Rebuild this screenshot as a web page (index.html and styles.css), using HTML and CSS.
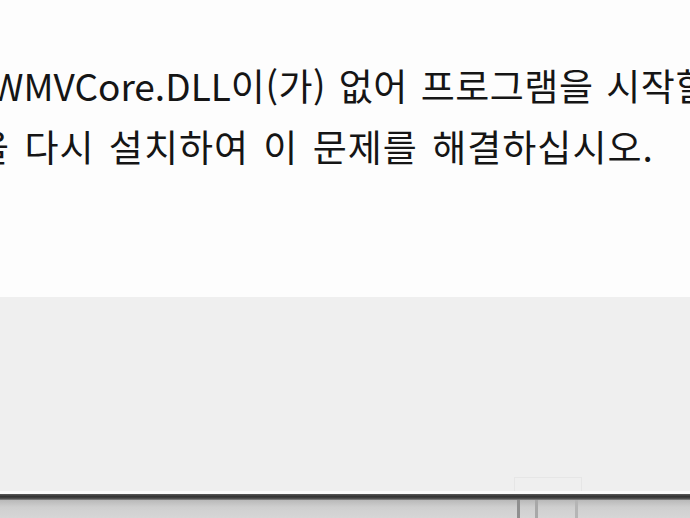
FILE: index.html
```html
<!DOCTYPE html>
<html lang="ko">
<head>
    <meta charset="UTF-8">
    <title>WMVCore.DLL 오류</title>
    <link rel="stylesheet" href="styles.css">
</head>
<body>
    <div class="dialog">
        <div class="message">
            <p class="line line-first"><span class="latin">WMVCore.DLL</span>이(가) 없어 프로그램을 시작할 수 없습니다.</p>
            <p class="line line-second">을 다시 설치하여 이 문제를 해결하십시오.</p>
        </div>
        <div class="button-bar">
            <div class="ghost-button"></div>
        </div>
        <div class="divider"></div>
        <div class="taskbar">
            <span class="tick tick-a"></span>
            <span class="tick tick-b"></span>
            <span class="tick tick-c"></span>
        </div>
    </div>
</body>
</html>
```

FILE: styles.css
```css
* {
    margin: 0;
    padding: 0;
    box-sizing: border-box;
}

html, body {
    width: 690px;
    height: 518px;
    overflow: hidden;
    background-color: #fdfdfd;
}

.dialog {
    display: flex;
    flex-direction: column;
    height: 518px;
}

.message {
    height: 297px;
    background-color: #fdfdfd;
    padding-top: 55px;
    overflow: hidden;
    font-family: "Noto Sans CJK KR", "Noto Sans", sans-serif;
    color: #151515;
    font-size: 37px;
    line-height: 61px;
}

.line {
    white-space: nowrap;
    letter-spacing: 1px;
    word-spacing: 3px;
}

.latin {
    letter-spacing: 0;
}

.line-first {
    margin-left: -9px;
    letter-spacing: 0.5px;
    word-spacing: 2px;
}

.line-second {
    margin-left: -25px;
}

.button-bar {
    height: 197px;
    background-color: #efefef;
    border-bottom: 3px solid #fafafa;
    display: flex;
    justify-content: flex-end;
    align-items: flex-end;
    padding-right: 108px;
}

.ghost-button {
    width: 68px;
    height: 14px;
    border: 1px solid #e6e6e6;
    border-bottom: none;
}

.divider {
    height: 6px;
    background: linear-gradient(#5a5a5a, #333 40%, #444 70%, #8a8a8a);
}

.taskbar {
    flex: 1;
    background: linear-gradient(#b9b9b9, #cfcfcf 40%, #d6d6d6);
    display: flex;
    padding-left: 517px;
}

.tick {
    width: 3px;
    background-color: #8f8f8f;
}

.tick-a {
    margin-right: 15px;
}

.tick-b {
    margin-right: 37px;
    background-color: #a8a8a8;
}

.tick-c {
    background-color: #b5b5b5;
}
```
